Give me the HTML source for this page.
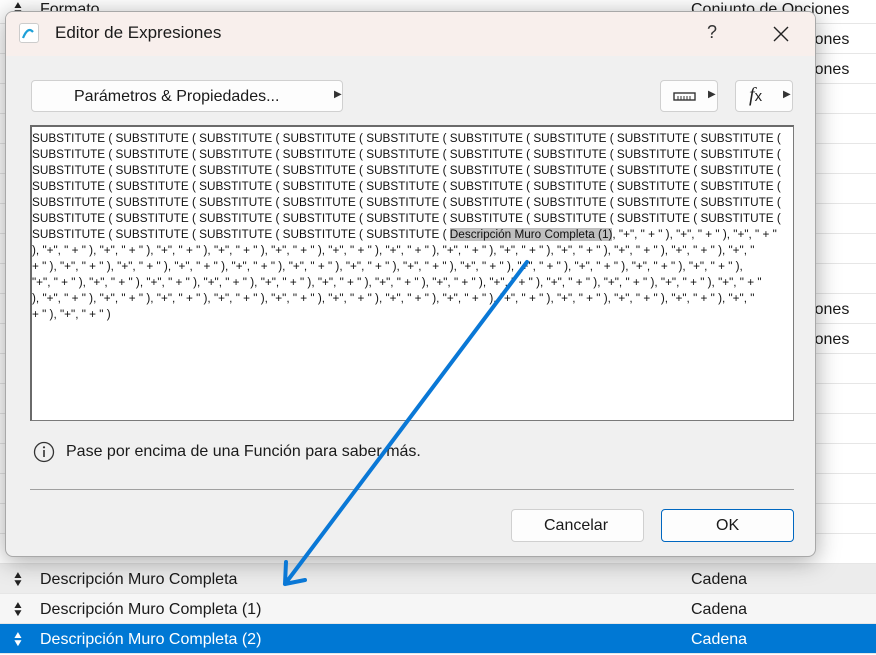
<!DOCTYPE html>
<html><head><meta charset="utf-8"><style>
*{margin:0;padding:0;box-sizing:border-box}
body{width:876px;height:655px;overflow:hidden;background:#fff;font-family:"Liberation Sans",sans-serif;position:relative}
.row{position:absolute;left:0;width:876px;height:30px;border-bottom:1px solid #e6e6e6;font-size:16px;color:#1a1a1a}
.row .a{position:absolute;left:40px;top:7px}
.row .b{position:absolute;left:691px;top:7px}
.row .s{position:absolute;left:13px;top:8px;font-size:10px;line-height:8px;color:#222;transform:scaleX(1.2)}
.sel{background:#0078d4;color:#fff}
.sel .s{color:#fff}
.dlg{position:absolute;left:5px;top:11px;width:811px;height:546px;background:#f0f0f0;border:1px solid #a8a8a8;border-radius:8px;box-shadow:0 4px 24px rgba(0,0,0,.35);overflow:hidden}
.tb{height:44px;background:#f8efec;position:relative}
.btn{position:absolute;background:#fdfdfd;border:1px solid #d0d0d0;border-radius:4px}
.ta{position:absolute;left:24px;top:113px;width:764px;height:296px;background:#fff;border:1px solid #7a7a7a;border-top:2px solid #6a6a6a;border-left:2px solid #6a6a6a;padding:4px 0 0 0;font-size:11.75px;line-height:16px;color:#111;overflow:hidden}
.ta div{white-space:pre;overflow:hidden;width:757px}
.hl{background:#c0c0c0}
</style></head><body>
<div class="row" style="top:-6px"><span class="s">▲<br>▼</span><span class="a">Formato</span><span class="b">Conjunto de Opciones</span></div>
<div class="row" style="top:24px"><span class="b">Conjunto de Opciones</span></div>
<div class="row" style="top:54px"><span class="b">Conjunto de Opciones</span></div>
<div class="row" style="top:84px"></div><div class="row" style="top:114px"></div><div class="row" style="top:144px"></div><div class="row" style="top:174px"></div><div class="row" style="top:204px"></div><div class="row" style="top:234px"></div><div class="row" style="top:264px"></div>
<div class="row" style="top:294px"><span class="b">Conjunto de Opciones</span></div>
<div class="row" style="top:324px"><span class="b">Conjunto de Opciones</span></div>
<div class="row" style="top:354px"></div><div class="row" style="top:384px"></div><div class="row" style="top:414px"></div><div class="row" style="top:444px"></div><div class="row" style="top:474px"></div><div class="row" style="top:504px"></div><div class="row" style="top:534px"></div>
<div class="row" style="top:564px;background:#ececec"><span class="s">▲<br>▼</span><span class="a">Descripción Muro Completa</span><span class="b">Cadena</span></div>
<div class="row" style="top:594px;background:#f6f6f6"><span class="s">▲<br>▼</span><span class="a">Descripción Muro Completa (1)</span><span class="b">Cadena</span></div>
<div class="row sel" style="top:624px"><span class="s">▲<br>▼</span><span class="a">Descripción Muro Completa (2)</span><span class="b">Cadena</span></div>

<div class="dlg">
 <div class="tb">
  <div style="position:absolute;left:13px;top:11px;width:20px;height:20px;border:1px solid #ccc;border-radius:3px;background:#fff">
   <svg width="18" height="18" viewBox="0 0 18 18"><path d="M3 14 Q8 2 13 8" stroke="#1ea0d8" stroke-width="2.2" fill="none"/></svg></div>
  <span style="position:absolute;left:49px;top:11px;font-size:17px;color:#1a1a1a">Editor de Expresiones</span>
  <span style="position:absolute;left:701px;top:10px;font-size:18px;color:#333">?</span>
  <svg style="position:absolute;left:766px;top:13px" width="18" height="18"><path d="M2 2L16 16M16 2L2 16" stroke="#222" stroke-width="1.4"/></svg>
 </div>
 <div class="btn" style="left:25px;top:68px;width:312px;height:32px"><span style="position:absolute;left:42px;top:7px;font-size:16px;color:#1a1a1a">Parámetros &amp; Propiedades...</span><span style="position:absolute;left:302px;top:8px;font-size:10px;color:#333">▶</span></div>
 <div class="btn" style="left:654px;top:68px;width:58px;height:32px"><svg style="position:absolute;left:12px;top:11px" width="24" height="10"><rect x="1" y="1" width="21" height="7" fill="none" stroke="#333" stroke-width="1.4"/><path d="M5 4v4M8 4v4M11 4v4M14 4v4M17 4v4" stroke="#333"/></svg><span style="position:absolute;left:47px;top:8px;font-size:10px;color:#333">▶</span></div>
 <div class="btn" style="left:729px;top:68px;width:58px;height:32px"><span style="position:absolute;left:13px;top:3px;font-size:20px;font-style:italic;font-family:'Liberation Serif',serif;color:#222">f<span style="font-size:15px;font-family:'Liberation Sans',sans-serif;font-style:normal">x</span></span><span style="position:absolute;left:47px;top:8px;font-size:10px;color:#333">▶</span></div>
 <div class="ta">
<div>SUBSTITUTE ( SUBSTITUTE ( SUBSTITUTE ( SUBSTITUTE ( SUBSTITUTE ( SUBSTITUTE ( SUBSTITUTE ( SUBSTITUTE ( SUBSTITUTE (</div>
<div>SUBSTITUTE ( SUBSTITUTE ( SUBSTITUTE ( SUBSTITUTE ( SUBSTITUTE ( SUBSTITUTE ( SUBSTITUTE ( SUBSTITUTE ( SUBSTITUTE (</div>
<div>SUBSTITUTE ( SUBSTITUTE ( SUBSTITUTE ( SUBSTITUTE ( SUBSTITUTE ( SUBSTITUTE ( SUBSTITUTE ( SUBSTITUTE ( SUBSTITUTE (</div>
<div>SUBSTITUTE ( SUBSTITUTE ( SUBSTITUTE ( SUBSTITUTE ( SUBSTITUTE ( SUBSTITUTE ( SUBSTITUTE ( SUBSTITUTE ( SUBSTITUTE (</div>
<div>SUBSTITUTE ( SUBSTITUTE ( SUBSTITUTE ( SUBSTITUTE ( SUBSTITUTE ( SUBSTITUTE ( SUBSTITUTE ( SUBSTITUTE ( SUBSTITUTE (</div>
<div>SUBSTITUTE ( SUBSTITUTE ( SUBSTITUTE ( SUBSTITUTE ( SUBSTITUTE ( SUBSTITUTE ( SUBSTITUTE ( SUBSTITUTE ( SUBSTITUTE (</div>
<div>SUBSTITUTE ( SUBSTITUTE ( SUBSTITUTE ( SUBSTITUTE ( SUBSTITUTE ( <span class="hl">Descripción Muro Completa (1)</span>, "+", " + " ), "+", " + " ), "+", " + "</div>
<div>), "+", " + " ), "+", " + " ), "+", " + " ), "+", " + " ), "+", " + " ), "+", " + " ), "+", " + " ), "+", " + " ), "+", " + " ), "+", " + " ), "+", " + " ), "+", " + " ), "+", "</div>
<div>+ " ), "+", " + " ), "+", " + " ), "+", " + " ), "+", " + " ), "+", " + " ), "+", " + " ), "+", " + " ), "+", " + " ), "+", " + " ), "+", " + " ), "+", " + " ), "+", " + " ),</div>
<div>"+", " + " ), "+", " + " ), "+", " + " ), "+", " + " ), "+", " + " ), "+", " + " ), "+", " + " ), "+", " + " ), "+", " + " ), "+", " + " ), "+", " + " ), "+", " + " ), "+", " + "</div>
<div>), "+", " + " ), "+", " + " ), "+", " + " ), "+", " + " ), "+", " + " ), "+", " + " ), "+", " + " ), "+", " + " ), "+", " + " ), "+", " + " ), "+", " + " ), "+", " + " ), "+", "</div>
<div>+ " ), "+", " + " )</div>
 </div>
 <svg style="position:absolute;left:27px;top:429px" width="22" height="22"><circle cx="11" cy="11" r="9.5" fill="none" stroke="#333" stroke-width="1.3"/><rect x="10.2" y="9" width="1.6" height="7" fill="#333"/><circle cx="11" cy="6.3" r="1.1" fill="#333"/></svg>
 <span style="position:absolute;left:60px;top:431px;font-size:16px;color:#1a1a1a">Pase por encima de una Función para saber más.</span>
 <div style="position:absolute;left:24px;top:477px;width:764px;height:1px;background:#a0a0a0"></div>
 <div class="btn" style="left:505px;top:497px;width:133px;height:33px"><span style="position:absolute;left:32px;top:7px;font-size:16px;color:#1a1a1a">Cancelar</span></div>
 <div class="btn" style="left:655px;top:497px;width:133px;height:33px;border-color:#0067c0"><span style="position:absolute;left:54px;top:7px;font-size:16px;color:#1a1a1a">OK</span></div>
</div>
<svg style="position:absolute;left:0;top:0" width="876" height="655"><path d="M527 262L285 584M285 584L286 562M285 584L305 580" stroke="#0a78d6" stroke-width="4" stroke-linecap="round" fill="none"/></svg>
</body></html>
